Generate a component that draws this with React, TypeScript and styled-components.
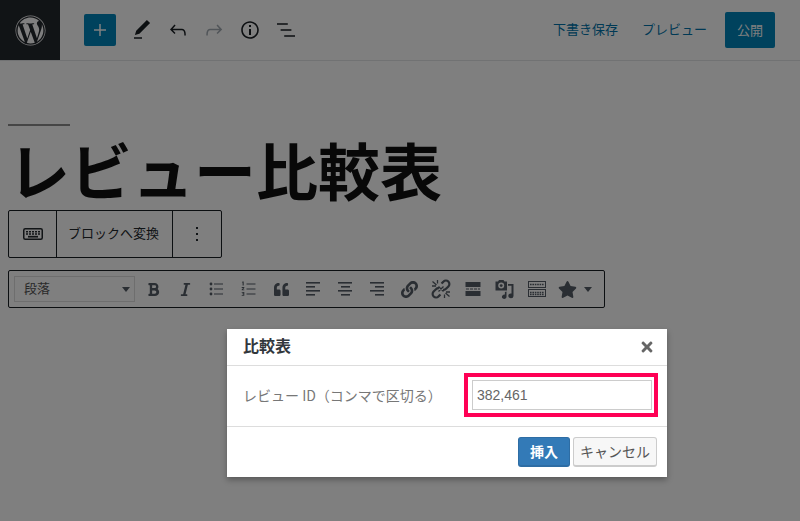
import React from "react";
import styled, { createGlobalStyle } from "styled-components";
import { FaWordpress, FaBold, FaItalic, FaQuoteLeft, FaLink, FaStar, FaTimes } from "react-icons/fa";

const GlobalStyle = createGlobalStyle`
  html, body {
    margin: 0;
    padding: 0;
    background: #fff;
  }
  body {
    font-family: "Noto Sans CJK JP", "Liberation Sans", sans-serif;
    overflow: hidden;
  }
  * {
    box-sizing: border-box;
  }
`;

const Page = styled.div`
  position: relative;
  width: 800px;
  height: 521px;
  overflow: hidden;
`;

// ヘッダー
const Header = styled.header`
  display: flex;
  align-items: center;
  height: 61px;
  padding-right: 25px;
  border-bottom: 1px solid #e2e4e7;
`;

const Logo = styled.div`
  display: flex;
  align-items: center;
  justify-content: center;
  width: 60px;
  height: 60px;
  background: #23282d;
  color: #fff;
  font-size: 31px;
`;

const AddButton = styled.button`
  display: flex;
  align-items: center;
  justify-content: center;
  width: 32px;
  height: 32px;
  margin: 0 8px 0 24px;
  padding: 0;
  border: 0;
  border-radius: 2px;
  background: #0085ba;
  color: #fff;
`;

const IconButton = styled.button<{ $disabled?: boolean }>`
  display: flex;
  align-items: center;
  justify-content: center;
  width: 36px;
  height: 36px;
  padding: 0;
  border: 0;
  background: none;
  color: ${({ $disabled }) => ($disabled ? "#a2aab2" : "#191e23")};
`;

const HeaderRight = styled.div`
  display: flex;
  align-items: center;
  margin-left: auto;
`;

const HeaderLink = styled.a`
  margin-right: 24px;
  padding-bottom: 2px;
  font-size: 13px;
  line-height: 20px;
  color: #0073aa;

  &:last-of-type {
    margin-right: 18px;
  }
`;

const PublishButton = styled.button`
  width: 50px;
  height: 36px;
  padding: 0 0 2px;
  border: 0;
  border-radius: 2px;
  background: #0085ba;
  color: #fff;
  font-family: inherit;
  font-size: 13px;
`;

// 本文
const Editor = styled.main`
  padding: 63px 0 0 8px;
`;

const Rule = styled.div`
  width: 62px;
  height: 2px;
  background: #8d8d8d;
`;

const Title = styled.h1`
  height: 65px;
  margin: 11px 0 0;
  font-size: 62px;
  font-weight: 700;
  line-height: 65px;
  color: #111;
  white-space: nowrap;
`;

const BlockToolbar = styled.div`
  display: flex;
  width: 214px;
  height: 48px;
  margin-top: 8px;
  border: 1px solid #191e23;
  border-radius: 2px;
`;

const BlockCell = styled.div<{ $width: number; $text?: boolean }>`
  display: flex;
  align-items: center;
  justify-content: center;
  flex: 0 0 ${({ $width }) => $width}px;
  padding-bottom: ${({ $text }) => ($text ? "3px" : "0")};
  padding-right: ${({ $text }) => ($text ? "2px" : "0")};
  color: #23282d;
  font-size: 13px;

  & + & {
    border-left: 1px solid #191e23;
  }
`;

const ClassicToolbar = styled.div`
  display: flex;
  align-items: center;
  width: 597px;
  height: 38px;
  margin-top: 12px;
  padding-left: 5px;
  border: 1px solid #191e23;
  border-radius: 2px;
`;

const FormatSelect = styled.div`
  display: flex;
  align-items: center;
  justify-content: space-between;
  width: 121px;
  height: 26px;
  margin-right: 2px;
  padding: 0 4px 3px 9px;
  border: 1px solid #ddd;
  font-size: 13px;
  color: #555;
`;

const Caret = styled.span`
  width: 0;
  height: 0;
  border-left: 4px solid transparent;
  border-right: 4px solid transparent;
  border-top: 5px solid #555d66;
`;

const SelectCaret = styled(Caret)`
  margin-top: 3px;
`;

const Tool = styled.span<{ $wide?: boolean }>`
  display: flex;
  align-items: center;
  justify-content: center;
  gap: 7px;
  width: ${({ $wide }) => ($wide ? "44px" : "32px")};
  height: 26px;
  color: #555d66;
  font-size: 16px;
`;

// モーダル
const Overlay = styled.div`
  position: absolute;
  inset: 0;
  background: rgba(0, 0, 0, 0.5);
`;

const Modal = styled.section`
  position: absolute;
  left: 227px;
  top: 329px;
  width: 440px;
  height: 148px;
  background: #fff;
  box-shadow: 0 3px 6px rgba(0, 0, 0, 0.3);
`;

const ModalHead = styled.div`
  display: flex;
  align-items: center;
  justify-content: space-between;
  height: 37px;
  padding: 0 12px 0 16px;
  border-bottom: 1px solid #ddd;
`;

const ModalTitle = styled.h2`
  margin: 0 0 3px;
  font-size: 16px;
  font-weight: 700;
  line-height: 33px;
  color: #32373c;
`;

const CloseIcon = styled.span`
  display: flex;
  color: #666;
  font-size: 16px;
`;

const ModalBody = styled.div`
  display: flex;
  align-items: center;
  justify-content: space-between;
  height: 61px;
  padding: 0 9px 2px 16px;
  border-bottom: 1px solid #ddd;
`;

const FieldLabel = styled.label`
  font-size: 14px;
  color: #777;
`;

const Highlight = styled.div`
  width: 194px;
  height: 44px;
  padding: 3px 2px 3px 4px;
  border: 4px solid #ff0055;
`;

const FieldInput = styled.input`
  display: block;
  width: 180px;
  height: 30px;
  padding: 0 4px;
  border: 1px solid #ccc;
  outline: 0;
  font-family: "Liberation Sans", sans-serif;
  font-size: 14px;
  color: #666;
`;

const ModalFoot = styled.div`
  display: flex;
  justify-content: flex-end;
  gap: 3px;
  padding: 10px 10px 0 0;
`;

const ModalButton = styled.button<{ $primary?: boolean }>`
  height: 30px;
  padding: 0 0 2px;
  width: ${({ $primary }) => ($primary ? "52px" : "84px")};
  border: 1px solid ${({ $primary }) => ($primary ? "#2e6da4" : "#ccc")};
  border-bottom-width: 2px;
  border-radius: 3px;
  background: ${({ $primary }) => ($primary ? "#337ab7" : "#f7f7f7")};
  color: ${({ $primary }) => ($primary ? "#fff" : "#555")};
  font-family: inherit;
  font-size: 14px;
  font-weight: ${({ $primary }) => ($primary ? 700 : 400)};
  line-height: 1;
`;

const Glyph = ({ d, size = 24 }: { d: string; size?: number }) => (
  <svg width={size} height={size} viewBox="0 0 24 24" fill="currentColor">
    <path d={d} />
  </svg>
);

const icons = {
  plus: "M12.75 6h-1.5v5.25H6v1.5h5.25V18h1.5v-5.25H18v-1.5h-5.25z",
  pen: "M20.1 5.1L16.9 2 6.2 12.7l-1.3 4.4 4.5-1.3L20.1 5.1zM4 20.8h8v-1.5H4v1.5z",
  undo: "M18.3 11.7c-.6-.6-1.4-.9-2.3-.9H6.7l2.9-3.3-1.1-1-4.5 5L8.5 16l1-1-2.7-2.7H16c.5 0 .9.2 1.3.5 1 1 1 3.4 1 4.5v.3h1.5v-.2c0-1.5 0-4.3-1.5-5.7z",
  redo: "M15.6 6.5l-1.1 1 2.9 3.3H8c-.9 0-1.7.3-2.3.9-1.4 1.5-1.4 4.2-1.4 5.6v.2h1.5v-.3c0-1.1 0-3.5 1-4.5.3-.3.7-.5 1.3-.5h9.2L14.5 15l1.1 1.1 4.6-4.6-4.6-5z",
  info: "M12 3.2c-4.8 0-8.8 3.9-8.8 8.8 0 4.8 3.9 8.8 8.8 8.8 4.8 0 8.8-3.9 8.8-8.8 0-4.8-4-8.8-8.8-8.8zm0 16c-4 0-7.2-3.3-7.2-7.2C4.8 8 8 4.8 12 4.8s7.2 3.3 7.2 7.2c0 4-3.2 7.2-7.2 7.2zM11 17h2v-6h-2v6zm0-8h2V7h-2v2z",
  list: "M13.8 5.2H3v1.5h10.8V5.2zm-3.6 12v1.5H21v-1.5H10.2zm7.2-6H6.6v1.5h10.8v-1.5z",
  more: "M13 19h-2v-2h2v2zm0-6h-2v-2h2v2zm0-6h-2V5h2v2z",
};

const Svg20 = ({ children }: { children: React.ReactNode }) => (
  <svg width="20" height="20" viewBox="0 0 20 20" fill="currentColor">
    {children}
  </svg>
);

const KeyboardIcon = () => (
  <svg width="24" height="24" viewBox="0 0 24 24" fill="none" stroke="currentColor">
    <rect x="2.75" y="6.75" width="18.5" height="10.5" rx="1.5" strokeWidth="1.5" />
    <path d="M5 9.8h14M5 12h14" strokeWidth="1.5" strokeDasharray="2 1" />
    <path d="M7 14.7h10" strokeWidth="1.7" />
  </svg>
);

const BulletList = () => (
  <Svg20>
    <circle cx="4" cy="5" r="1.4" />
    <circle cx="4" cy="10" r="1.4" />
    <circle cx="4" cy="15" r="1.4" />
    <path d="M7 4.5h9v1H7zM7 9.5h9v1H7zM7 14.5h9v1H7z" />
  </Svg20>
);

const NumberList = () => (
  <Svg20>
    <path d="M3.5 2.5h1.2v4H3.6V3.6h-.8zM2.7 8h2.6v.9L3.9 10.4h1.4v.9H2.7v-.9L4.1 8.9H2.7zM2.7 13h2.6v3.8H2.7v-.8h1.6v-.7H3.2v-.7h1.1v-.8H2.7z" />
    <path d="M7.5 4.5h9v1h-9zM7.5 9.5h9v1h-9zM7.5 14.5h9v1h-9z" />
  </Svg20>
);

const Align = ({ mode }: { mode: "left" | "center" | "right" }) => {
  const short = { left: 3, center: 6, right: 8 }[mode];
  return (
    <Svg20>
      <rect x="3" y="3" width="14" height="1.6" />
      <rect x={short} y="7" width="9" height="1.6" />
      <rect x="3" y="11" width="14" height="1.6" />
      <rect x={short} y="15" width="9" height="1.6" />
    </Svg20>
  );
};

// リンク解除：鎖の両端と中央の放射線
const UnlinkIcon = () => (
  <svg width="20" height="20" viewBox="0 0 20 20" fill="none" stroke="currentColor">
    <path
      d="M10.5 4.5 12.5 2.6a3.4 3.4 0 0 1 4.9 4.8L15 9.8a3.4 3.4 0 0 1-3 1M9.5 15.5 7.5 17.4a3.4 3.4 0 0 1-4.9-4.8L5 10.2a3.4 3.4 0 0 1 3-1"
      strokeWidth="2.2"
    />
    <path
      d="M1.5 2.5l4 3.5M1 7h4M6.5 1v3.5M18.5 17.5l-4-3.5M19 13h-4M13.5 19v-3.5M7.5 7.5l5 5M12.5 7.5l-5 5"
      strokeWidth="1.3"
    />
  </svg>
);

const MoreBar = () => (
  <Svg20>
    <path d="M2.5 3h15v5h-15zM2.5 12h15v5h-15z" />
    <path d="M3 9.4h3v1.2H3zM7 9.4h3v1.2H7zM11 9.4h3v1.2h-3zM15 9.4h2v1.2h-2z" />
  </Svg20>
);

const MediaIcon = () => (
  <Svg20>
    <path
      fillRule="evenodd"
      d="M.5 2.5h2.5l1-1.5h4.5l1 1.5H12v9H.5zM6.2 3.6a3 3 0 100 6 3 3 0 000-6z"
    />
    <circle cx="6.2" cy="6.6" r="1.4" />
    <path d="M7.5 16.6a2.3 2 0 104 1.2v-5.3l-1.6.4v2.7a2.5 2.5 0 00-2.4 1z" />
    <path d="M13 5h5.5v11.8a2.6 2.3 0 11-2-2.2V6.8H13z" />
  </Svg20>
);

const TableIcon = () => (
  <svg width="20" height="20" viewBox="0 0 20 20" fill="none" stroke="currentColor">
    <rect x="1.5" y="2.5" width="17" height="6" />
    <rect x="1.5" y="10.5" width="17" height="7" />
    <path d="M3 5.5h14M3 13.5h14M3 15.5h14" strokeWidth="1.4" strokeDasharray="1.6 0.8" />
  </svg>
);

export default function App() {
  return (
    <Page>
      <GlobalStyle />
      <Header>
        <Logo>
          <FaWordpress />
        </Logo>
        <AddButton>
          <Glyph d={icons.plus} />
        </AddButton>
        <IconButton>
          <Glyph d={icons.pen} />
        </IconButton>
        <IconButton>
          <Glyph d={icons.undo} />
        </IconButton>
        <IconButton $disabled>
          <Glyph d={icons.redo} />
        </IconButton>
        <IconButton>
          <Glyph d={icons.info} />
        </IconButton>
        <IconButton>
          <Glyph d={icons.list} />
        </IconButton>
        <HeaderRight>
          <HeaderLink>下書き保存</HeaderLink>
          <HeaderLink>プレビュー</HeaderLink>
          <PublishButton>公開</PublishButton>
        </HeaderRight>
      </Header>

      <Editor>
        <Rule />
        <Title>レビュー比較表</Title>
        <BlockToolbar>
          <BlockCell $width={47}>
            <KeyboardIcon />
          </BlockCell>
          <BlockCell $width={116} $text>
            ブロックへ変換
          </BlockCell>
          <BlockCell $width={49}>
            <Glyph d={icons.more} />
          </BlockCell>
        </BlockToolbar>
        <ClassicToolbar>
          <FormatSelect>
            段落
            <SelectCaret />
          </FormatSelect>
          <Tool>
            <FaBold size={15} />
          </Tool>
          <Tool>
            <FaItalic size={15} />
          </Tool>
          <Tool>
            <BulletList />
          </Tool>
          <Tool>
            <NumberList />
          </Tool>
          <Tool>
            <FaQuoteLeft size={15} />
          </Tool>
          <Tool>
            <Align mode="left" />
          </Tool>
          <Tool>
            <Align mode="center" />
          </Tool>
          <Tool>
            <Align mode="right" />
          </Tool>
          <Tool>
            <FaLink size={17} />
          </Tool>
          <Tool>
            <UnlinkIcon />
          </Tool>
          <Tool>
            <MoreBar />
          </Tool>
          <Tool>
            <MediaIcon />
          </Tool>
          <Tool>
            <TableIcon />
          </Tool>
          <Tool $wide>
            <FaStar size={19} />
            <Caret />
          </Tool>
        </ClassicToolbar>
      </Editor>

      <Overlay />
      <Modal>
        <ModalHead>
          <ModalTitle>比較表</ModalTitle>
          <CloseIcon>
            <FaTimes />
          </CloseIcon>
        </ModalHead>
        <ModalBody>
          <FieldLabel>レビュー ID（コンマで区切る）</FieldLabel>
          <Highlight>
            <FieldInput defaultValue="382,461" />
          </Highlight>
        </ModalBody>
        <ModalFoot>
          <ModalButton $primary>挿入</ModalButton>
          <ModalButton>キャンセル</ModalButton>
        </ModalFoot>
      </Modal>
    </Page>
  );
}
